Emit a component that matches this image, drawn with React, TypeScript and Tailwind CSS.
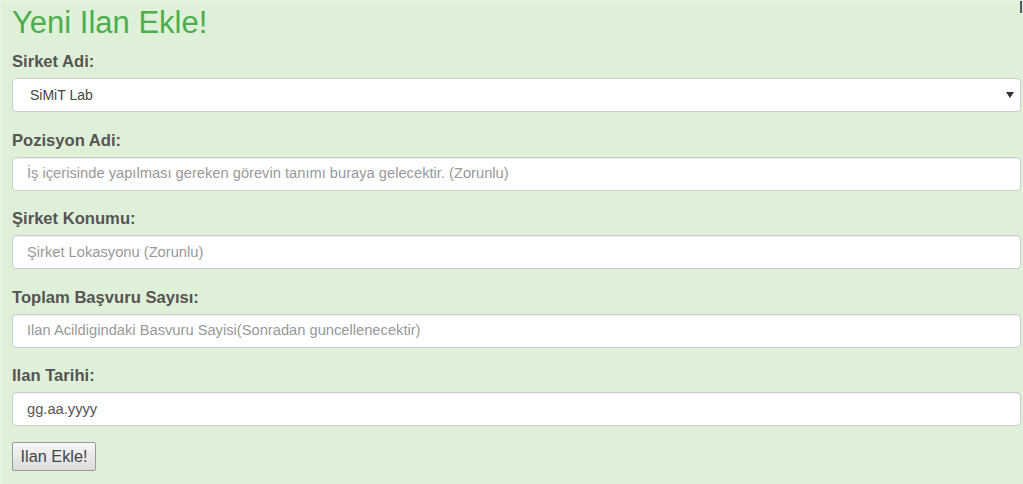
import React from "react";

const font = { fontFamily: '"Liberation Sans", Arial, sans-serif' };

function Label({ children }: { children: React.ReactNode }) {
  return (
    <div className="text-[16.6px] leading-[22px] font-bold text-[#555] mb-[5px]">{children}</div>
  );
}

function Field({ placeholder, value }: { placeholder?: string; value?: string }) {
  return (
    <div className="h-[34px] bg-white border border-[#ccc] rounded-[4px] flex items-center pl-[14px] text-[14.7px] shadow-[inset_0_1px_1px_rgba(0,0,0,0.075)]">
      {value ? (
        <span className="text-[#555]">{value}</span>
      ) : (
        <span className="text-[#999]">{placeholder}</span>
      )}
    </div>
  );
}

export default function App() {
  return (
    <div
      className="relative w-[1023px] h-[484px] bg-[#dff0d8] overflow-hidden border-t border-l border-[#e7f4e2]"
      style={font}
    >
      <div className="absolute right-[1px] top-0 w-[2px] h-[12px] bg-[#4d5c62]" />
      <div className="pl-[11px] w-[1020px]">
        <h1 className="text-[31px] leading-[33px] text-[#4cae4c] pt-[5px] mb-[12px] font-normal">
          Yeni Ilan Ekle!
        </h1>
        <div className="mb-[17.5px]">
          <Label>Sirket Adi:</Label>
          <div className="h-[34px] bg-white border border-[#ccc] rounded-[4px] flex items-center justify-between pl-[17px] pr-[6px] text-[14px] text-[#444]">
            <span>SiMiT Lab</span>
            <svg width="8" height="6" viewBox="0 0 8 6">
              <path d="M0 0 L8 0 L4 6 Z" fill="#333" />
            </svg>
          </div>
        </div>
        <div className="mb-[17.5px]">
          <Label>Pozisyon Adi:</Label>
          <Field placeholder="İş içerisinde yapılması gereken görevin tanımı buraya gelecektir. (Zorunlu)" />
        </div>
        <div className="mb-[17.5px]">
          <Label>Şirket Konumu:</Label>
          <Field placeholder="Şirket Lokasyonu (Zorunlu)" />
        </div>
        <div className="mb-[17.5px]">
          <Label>Toplam Başvuru Sayısı:</Label>
          <Field placeholder="Ilan Acildigindaki Basvuru Sayisi(Sonradan guncellenecektir)" />
        </div>
        <div className="mb-[16px]">
          <Label>Ilan Tarihi:</Label>
          <Field value="gg.aa.yyyy" />
        </div>
        <button className="h-[29px] w-[84px] border border-[#999] rounded-[2px] bg-gradient-to-b from-[#f7f7f7] to-[#dcdcdc] text-[16.3px] text-[#444] leading-none">
          Ilan Ekle!
        </button>
      </div>
    </div>
  );
}
